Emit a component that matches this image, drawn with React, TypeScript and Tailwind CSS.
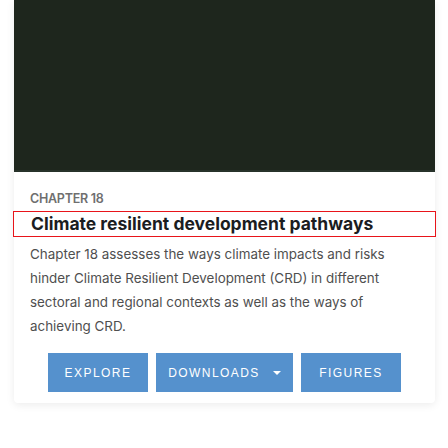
import React from "react";

export default function App() {
  return (
    <div className="w-[448px] h-[448px] bg-white relative overflow-hidden" style={{ fontFamily: "Inter, 'Liberation Sans', sans-serif" }}>
      <div className="ml-[14px] w-[421px] bg-white shadow-[0_2px_8px_rgba(0,0,0,0.08)] rounded-b-[4px]">
        <div className="h-[172px] bg-[#1e261d] border-b-[2px] border-[#27322a]" />
        <div className="pt-[20px] pb-[11px]">
          <div className="px-[16px] text-[12.5px] font-semibold text-[#6f6f6f] leading-[14px] tracking-[-0.02em]">CHAPTER 18</div>
          <div className="mt-[5px] -mx-[1px] border border-[#e8141a] h-[26px] pl-[17px] flex items-center">
            <span className="text-[17.5px] font-bold text-[#1b1d1f] leading-none">Climate resilient development pathways</span>
          </div>
          <p className="mt-[5px] px-[16px] text-[13.4px] leading-[24px] text-[#4f4f4f]">
            Chapter 18 assesses the ways climate impacts and risks<br />hinder Climate Resilient Development (CRD) in different<br />sectoral and regional contexts as well as the ways of<br />achieving CRD.
          </p>
          <div className="mt-[15px] flex justify-center gap-[8px]" style={{ fontFamily: "'Liberation Sans', Arial, sans-serif" }}>
            <button className="w-[100px] h-[39px] bg-[#5591cd] text-white text-[12px] tracking-[0.12em]">EXPLORE</button>
            <button className="w-[137px] h-[39px] bg-[#5591cd] text-white text-[12px] tracking-[0.12em] flex items-center justify-center gap-[13px]">
              <span>DOWNLOADS</span>
              <svg width="8" height="4" viewBox="0 0 8 4"><path d="M0 0h8L4 4z" fill="white" /></svg>
            </button>
            <button className="w-[100px] h-[39px] bg-[#5591cd] text-white text-[12px] tracking-[0.12em]">FIGURES</button>
          </div>
        </div>
      </div>
    </div>
  );
}
